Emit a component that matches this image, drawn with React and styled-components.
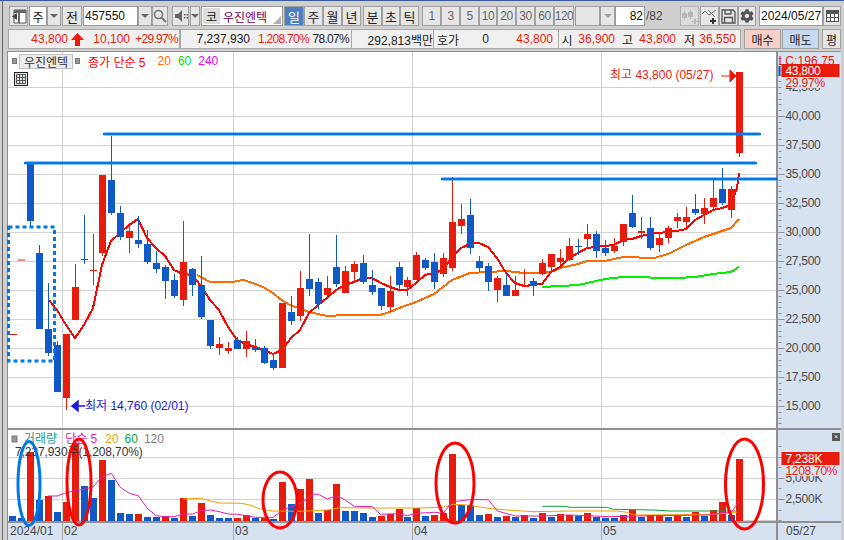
import styled, { createGlobalStyle } from "styled-components";
import { FaCog } from "react-icons/fa";

const RED = "#e81c0c";
const BLUE = "#1259c8";
const LINE_BLUE = "#0078e8";
const AXIS_BG = "#d6e2f0";
const GRID = "#d2d2d2";

const GlobalStyle = createGlobalStyle`
  html, body { margin: 0; padding: 0; background: #cfcfcf; overflow: hidden; }
  * { box-sizing: border-box; }
  body { font-family: "Liberation Sans", "Noto Sans CJK KR", sans-serif; font-size: 12px; }
`;

const Page = styled.div`
  width: 842px;
  height: 540px;
  margin-left: 2px;
  border-left: 1px solid #6a6a6a;
  background: #cfcfcf;
  display: flex;
  flex-direction: column;
  position: relative;
`;

const TopEdge = styled.div`
  height: 1px;
  margin-left: -3px;
  width: 844px;
  background: #3a5a9a;
  flex: none;
`;

const Toolbar = styled.div`
  display: flex;
  height: 20px;
  margin-top: 5px;
  padding-left: 6px;
  flex: none;
`;

const Btn = styled.div`
  width: ${(p) => p.$w || 19}px;
  margin-left: ${(p) => p.$ml || 0}px;
  height: 20px;
  flex: none;
  border: 1px solid #a0a0a0;
  background: ${(p) => (p.$active ? "#4a7fc0" : "#e6e6e6")};
  color: ${(p) => (p.$active ? "#fff" : p.$muted ? "#666" : "#222")};
  display: flex;
  align-items: center;
  justify-content: center;
  font-size: ${(p) => (p.$muted ? 12 : 13)}px;
  letter-spacing: ${(p) => (p.$muted ? -0.5 : 0)}px;
  white-space: nowrap;
  overflow: hidden;
  opacity: ${(p) => (p.$faded ? 0.6 : 1)};
`;

const Field = styled.div`
  width: ${(p) => p.$w}px;
  margin-left: ${(p) => p.$ml || 0}px;
  height: 20px;
  flex: none;
  border: 1px solid #9a9a9a;
  background: #fff;
  color: #111;
  display: flex;
  align-items: center;
  justify-content: ${(p) => p.$align || "flex-start"};
  padding: 0 1px;
  font-size: 12px;
  position: relative;
  white-space: nowrap;
`;

const Caret = styled.i`
  width: 0;
  height: 0;
  border-left: 4px solid transparent;
  border-right: 4px solid transparent;
  border-top: 4px solid ${(p) => p.$color || "#666"};
`;

const Chip = styled.span`
  width: 17px;
  height: 16px;
  background: #dcdcdc;
  display: flex;
  align-items: center;
  justify-content: center;
  margin-right: 3px;
  font-size: 12px;
`;

const StockName = styled.span`
  color: #7a0050;
  font-size: 12px;
`;

const CornerMark = styled.i`
  position: absolute;
  right: 1px;
  bottom: 1px;
  width: 0;
  height: 0;
  border-left: 8px solid transparent;
  border-bottom: 8px solid #b0b0b0;
`;

const PageCount = styled.span`
  width: 35px;
  flex: none;
  color: #444;
  font-size: 12px;
  line-height: 20px;
  padding-left: 1px;
`;

const InfoRow = styled.div`
  display: flex;
  height: 20px;
  margin-top: 3px;
  padding-left: 5px;
  flex: none;
`;

const InfoGroup = styled.div`
  width: ${(p) => p.$w}px;
  height: 20px;
  flex: none;
  display: flex;
  align-items: center;
  background: #f0f0f0;
  border: 1px solid #a8a8a8;
  border-left-width: ${(p) => (p.$join ? 0 : 1)}px;
  overflow: hidden;
`;

const Cell = styled.span`
  width: ${(p) => p.$w}px;
  flex: none;
  text-align: ${(p) => p.$align || "right"};
  color: ${(p) => (p.$red ? RED : "#222")};
  font-size: 12px;
  letter-spacing: ${(p) => (p.$tight ? -0.7 : 0)}px;
  white-space: nowrap;
`;

const ArrowCell = styled.span`
  width: 16px;
  flex: none;
  display: flex;
  justify-content: flex-end;
`;

const OrderBtn = styled.div`
  width: ${(p) => p.$w}px;
  margin-left: ${(p) => p.$ml || 0}px;
  height: 20px;
  flex: none;
  border: 1px solid #a0a0a0;
  background: ${(p) => p.$bg};
  color: #222;
  display: flex;
  align-items: center;
  justify-content: center;
  font-size: 12px;
`;

const Panes = styled.div`
  margin: 2px 0 0 4px;
  width: 834px;
  flex: 1;
  display: flex;
  flex-direction: column;
  border-top: 1px solid #909090;
  border-left: 1px solid #909090;
  min-height: 0;
`;

const PaneRow = styled.div`
  display: flex;
  height: ${(p) => p.$h}px;
  flex: none;
  border-bottom: 2px solid #909090;
`;

const Plot = styled.div`
  width: 768px;
  flex: none;
  background: #fff;
  position: relative;
`;

const Axis = styled.div`
  flex: 1;
  background: ${AXIS_BG};
  border-left: 2px solid #909090;
  position: relative;
`;

const Drawing = styled.svg`
  display: block;
  width: 100%;
  height: 100%;
  overflow: visible;
  position: relative;
  z-index: 2;
  font-family: "Liberation Sans", "Noto Sans CJK KR", sans-serif;
`;

const Legend = styled.div`
  position: absolute;
  z-index: 3;
  left: 2px;
  top: 1px;
  display: flex;
  align-items: center;
  height: 16px;
  font-size: 12px;
`;

const Pin = styled.i`
  width: 5px;
  height: 6px;
  background: #9a9a9a;
  border: 1px solid #777;
  margin: 0 2px;
`;

const NameTag = styled.span`
  width: 54px;
  height: 15px;
  background: #ececec;
  border: 1px solid #c0c0c0;
  color: #333;
  display: flex;
  align-items: center;
  justify-content: center;
  font-size: 12px;
`;

const Tone = styled.span`
  color: ${(p) => p.$c};
  margin-left: ${(p) => p.$ml || 0}px;
`;

const GridButton = styled.div`
  position: absolute;
  z-index: 3;
  left: 6px;
  top: 20px;
  width: 14px;
  height: 14px;
  border: 1px solid #222;
  background: #e6e6e6;
  display: flex;
  padding: 1px;
`;

const CloseMark = styled.div`
  position: absolute;
  z-index: 3;
  right: 1px;
  top: 3px;
  width: 8px;
  height: 8px;
  background: #555;
  color: #fff;
  font-size: 7px;
  line-height: 8px;
  text-align: center;
`;

const DateRow = styled.div`
  display: flex;
  flex: 1;
  background: ${AXIS_BG};
`;

const DateCell = styled.div`
  width: ${(p) => p.$w}px;
  flex: none;
  border-left: ${(p) => (p.$first ? "none" : p.$axis ? "2px solid #909090" : "1px solid #a8a8a8")};
  color: #444;
  font-size: 12px;
  line-height: 17px;
  padding-left: ${(p) => (p.$axis ? 8 : p.$first ? 2 : 1)}px;
  white-space: nowrap;
`;

// [body top, body bottom, wick top, wick bottom, colour], in page pixels
const candles = [
  [163, 221, 163, 228, "b"], [253, 329, 245, 329, "b"], [329, 353, 283, 356, "b"], [345, 392, 341, 392, "b"],
  [334, 398, 334, 410, "r"], [287, 320, 264, 320, "r"], [259, 260, 215, 264, "b"], [270, 271, 234, 285, "r"],
  [175, 253, 175, 256, "r"], [180, 213, 136, 215, "b"], [213, 237, 206, 240, "b"], [231, 238, 225, 253, "r"],
  [240, 244, 216, 248, "b"], [244, 262, 230, 264, "b"], [263, 269, 251, 273, "b"], [267, 281, 265, 299, "b"],
  [280, 296, 274, 298, "b"], [262, 300, 221, 306, "r"], [269, 285, 268, 296, "b"], [285, 317, 256, 319, "b"],
  [320, 346, 320, 349, "b"], [344, 348, 337, 355, "r"], [348, 351, 342, 354, "r"], [340, 349, 337, 349, "b"],
  [341, 349, 331, 357, "r"], [347, 350, 339, 352, "b"], [348, 363, 346, 364, "b"], [360, 368, 354, 370, "b"],
  [303, 368, 303, 368, "r"], [312, 321, 296, 325, "b"], [288, 316, 271, 321, "r"], [279, 289, 234, 296, "b"],
  [282, 304, 278, 309, "b"], [288, 295, 276, 298, "r"], [267, 284, 235, 287, "b"], [271, 293, 266, 293, "r"],
  [264, 272, 261, 282, "r"], [263, 282, 255, 284, "b"], [285, 292, 270, 295, "b"], [288, 306, 288, 310, "b"],
  [291, 307, 276, 312, "r"], [267, 285, 262, 290, "b"], [280, 287, 277, 296, "r"], [255, 280, 252, 280, "r"],
  [260, 268, 258, 270, "b"], [262, 282, 253, 289, "b"], [258, 274, 253, 277, "r"], [222, 268, 177, 271, "r"],
  [219, 226, 204, 234, "r"], [215, 248, 199, 254, "b"], [261, 268, 256, 272, "b"], [266, 282, 263, 291, "b"],
  [278, 290, 276, 302, "r"], [285, 296, 274, 296, "b"], [290, 296, 276, 296, "r"], [285, 286, 269, 286, "r"],
  [281, 286, 278, 296, "b"], [263, 274, 259, 275, "r"], [254, 267, 254, 271, "r"], [258, 262, 249, 265, "r"],
  [246, 260, 238, 261, "r"], [246, 247, 239, 255, "b"], [234, 239, 224, 248, "r"], [234, 251, 231, 258, "b"],
  [248, 253, 240, 256, "b"], [246, 251, 238, 253, "r"], [224, 242, 224, 246, "r"], [213, 227, 195, 228, "b"],
  [231, 233, 217, 239, "r"], [228, 248, 217, 250, "b"], [238, 245, 233, 252, "r"], [228, 238, 226, 243, "r"],
  [217, 221, 213, 228, "r"], [217, 222, 207, 228, "r"], [209, 213, 194, 215, "b"], [208, 214, 198, 224, "r"],
  [198, 207, 178, 210, "r"], [189, 203, 168, 205, "b"], [189, 210, 186, 218, "r"], [72, 153, 72, 157, "r"],
];

const barX = (i) => 30.5 + 9 * i - (i >= 42 ? 1 : 0) - (i === 79 ? 1 : 0);

const ma5 = "49,300 57,310 66,325 75,338 84,325 93,308 102,265 111,241 120,233 129,225 138,219 147,238 156,248 165,256 174,270 183,274 192,275 201,286 210,300 219,310 228,327 237,340 246,344 255,347 264,350 273,354 282,350 291,338 300,330 309,313 318,305 327,298 336,290 345,285 354,282 363,278 372,278 381,283 390,287 399,290 407,290 416,283 425,275 434,273 443,270 452,257 461,248 470,244 479,243 488,247 497,258 506,273 515,283 524,286 533,285 542,284 551,272 560,267 569,258 578,253 587,248 596,247 605,246 614,245 623,240 632,239 641,236 650,234 659,233 668,232 677,231 686,229 695,220 704,215 713,210 722,208 731,205 737,188 739,173";
const ma20 = "197,275 210,282 221,282 232,282 243,280 253,283 263,287 273,293 280,299 290,305 309,312 318,314 327,316 345,315 380,315 390,312 399,308 416,302 434,294 443,287 452,280 470,273 488,272 506,271 524,273 542,273 551,272 560,268 578,264 587,261 605,261 623,257 654,258 668,254 686,245 704,237 731,228 739,219";
const ma60 = "542,287 578,285 605,279 623,277 677,278 695,277 713,274 731,272 739,267";

// top of each volume bar, in zoom units (3x, starting at y = 425); first two bars lie left of the first candle
const volumes = [
  ["b", 273], ["b", 280], ["r", 80], ["b", 225], ["r", 213], ["b", 261], ["r", 231], ["r", 55], ["b", 183], ["b", 219],
  ["r", 105], ["b", 165], ["b", 264], ["b", 267], ["r", 267], ["b", 276], ["b", 276], ["r", 273], ["b", 278], ["r", 219],
  ["b", 273], ["r", 234], ["b", 270], ["b", 279], ["b", 279], ["r", 279], ["r", 270], ["b", 279], ["r", 278], ["b", 282],
  ["r", 171], ["b", 237], ["r", 192], ["r", 162], ["b", 264], ["r", 254], ["r", 177], ["b", 258], ["b", 258], ["b", 264],
  ["b", 276], ["r", 273], ["r", 268], ["r", 252], ["b", 276], ["r", 249], ["b", 273], ["r", 270], ["r", 264], ["r", 87],
  ["b", 241], ["b", 241], ["b", 270], ["r", 267], ["b", 276], ["r", 273], ["b", 276], ["r", 270], ["b", 279], ["r", 264],
  ["b", 276], ["r", 267], ["r", 270], ["b", 273], ["r", 264], ["b", 276], ["b", 279], ["b", 279], ["r", 270], ["r", 255],
  ["b", 276], ["r", 270], ["r", 270], ["b", 276], ["r", 270], ["b", 276], ["r", 261], ["b", 273], ["r", 255], ["r", 231],
  ["b", 270], ["r", 102],
];

const fromZoom = (ox, list) => list.map(([x, y]) => `${(ox + x / 3).toFixed(1)},${(425 + y / 3).toFixed(1)}`).join(" ");

const volMa5 =
  fromZoom(0, [[145, 213], [172, 213], [199, 203], [226, 197], [253, 193], [280, 185], [307, 155], [334, 145], [361, 187], [388, 205], [415, 212], [442, 250], [469, 272], [496, 275], [523, 275], [550, 267], [577, 267], [604, 257], [631, 255], [658, 260], [685, 267], [712, 268], [739, 272], [766, 277], [820, 277], [847, 255], [874, 245]]) +
  " " +
  fromZoom(300, [[0, 235], [40, 208], [55, 208], [82, 222], [109, 212], [136, 225], [163, 244], [217, 245], [241, 268], [295, 266], [322, 272], [349, 265], [403, 262], [430, 265], [457, 230], [511, 224], [565, 224], [592, 258], [646, 273], [727, 273], [808, 270]]) +
  " " +
  fromZoom(570, [[120, 275], [250, 272], [430, 270], [457, 262], [484, 262], [508, 228]]);
const volMa20 =
  fromZoom(0, [[550, 222], [604, 220], [631, 228], [660, 234], [724, 235], [750, 240], [780, 252], [820, 258]]) +
  " " +
  fromZoom(300, [[0, 259], [40, 257], [82, 255], [120, 248], [217, 249], [350, 249], [430, 247], [460, 238], [500, 240], [565, 250], [620, 255], [700, 260], [810, 258]]) +
  " " +
  fromZoom(570, [[140, 258], [170, 262], [190, 270], [430, 268], [500, 262]]);
const volMa60 =
  fromZoom(300, [[727, 244], [795, 244]]) + " " + fromZoom(570, [[0, 247], [110, 247], [130, 253], [250, 255], [300, 258], [500, 258]]);

const priceGrid = [87, 116, 145, 174, 203, 232, 261, 290, 319, 348, 377, 406];
const priceLabels = ["42,500", "40,000", "37,500", "35,000", "32,500", "30,000", "27,500", "25,000", "22,500", "20,000", "17,500", "15,000"];
const vLines = [62, 233, 412, 601];
const trendLines = [
  [103, 134, 761],
  [24, 163, 757],
  [441, 179, 778],
];

function Candles() {
  return candles.map(([top, bottom, wickTop, wickBottom, c], i) => {
    const x = barX(i);
    const fill = c === "r" ? RED : BLUE;
    return (
      <g key={i} fill={fill} shapeRendering="crispEdges">
        <rect x={x - 0.5} y={wickTop} width={1} height={wickBottom - wickTop} />
        <rect x={x - 3.5} y={top} width={7} height={bottom - top} />
      </g>
    );
  });
}

function PriceChart() {
  return (
    <Drawing viewBox="8 52 768 376">
      {priceGrid.map((y) => (
        <rect key={y} x={8} y={y} width={768} height={1} fill={GRID} />
      ))}
      {vLines.map((x) => (
        <rect key={x} x={x} y={52} width={1} height={376} fill={GRID} />
      ))}
      <g fill="none" strokeWidth="2" shapeRendering="crispEdges">
        <polyline points={ma60} stroke="#00f000" />
        <polyline points={ma20} stroke="#ff6a00" />
        <polyline points={ma5} stroke="#f00" />
      </g>
      <Candles />
      <rect x={18} y={259.5} width={7} height={1} fill={RED} />
      <rect x={10} y={334} width={7} height={1} fill={RED} />
      <rect x={8.5} y={227} width={46} height={134} fill="none" stroke={LINE_BLUE} strokeWidth="3" strokeDasharray="4 3" />
      {trendLines.map(([x1, y, x2]) => (
        <g key={y}>
          <rect x={x1} y={y - 2} width={x2 - x1} height={4} rx={2} fill={LINE_BLUE} opacity="0.45" />
          <rect x={x1} y={y - 1} width={x2 - x1} height={2} fill={LINE_BLUE} />
        </g>
      ))}
      <text x={610} y={79} fill={RED} fontSize="12">최고 43,800 (05/27)</text>
      <path d="M721 76h9M730 70l6 6-6 6z" stroke={RED} fill={RED} strokeWidth="1" />
      <text x={85} y={410} fill="#1a1ae0" fontSize="12">최저 14,760 (02/01)</text>
      <path d="M85 406H77M72 406l6-5v10z" stroke="#1a1ae0" fill="#1a1ae0" strokeWidth="1.5" />
    </Drawing>
  );
}

function PriceAxis() {
  const ticks = [];
  for (let y = 58; y < 428; y += 5.8) ticks.push(Math.round(y));
  return (
    <Drawing viewBox="778 52 62 376">
      {ticks.map((y) => (
        <rect key={y} x={778} y={y} width={3} height={1} fill="#909090" />
      ))}
      {priceGrid.map((y) => (
        <rect key={y} x={778} y={y} width={6} height={1} fill="#909090" />
      ))}
      {priceLabels.map((t, n) => (
        <text key={t} x={785} y={priceGrid[n] + 4} fill="#4a4a4a" fontSize="12" letterSpacing="-0.3">{t}</text>
      ))}
      <text x={778} y={65} fill={RED} fontSize="12" letterSpacing="0.1">LC:196.75</text>
      <rect x={778} y={66} width={2} height={10} fill={BLUE} />
      <rect x={781} y={77} width={58} height={11} fill={AXIS_BG} />
      <rect x={781} y={64} width={58} height={13} fill={RED} />
      <text x={785} y={75} fill="#fff" fontSize="12" letterSpacing="-0.3">43,800</text>
      <text x={785} y={87} fill={RED} fontSize="12" letterSpacing="-0.2">29.97%</text>
    </Drawing>
  );
}

function VolumeChart() {
  return (
    <Drawing viewBox="8 430 768 91">
      {[457, 478, 499, 520].map((y) => (
        <rect key={y} x={8} y={y} width={768} height={1} fill={GRID} />
      ))}
      {vLines.map((x) => (
        <rect key={x} x={x} y={430} width={1} height={91} fill={GRID} />
      ))}
      <g shapeRendering="crispEdges">
        {volumes.map(([c, z], n) => {
          const top = 425 + z / 3;
          return <rect key={n} x={barX(n - 2) - 3.5} y={top} width={7} height={520.7 - top} fill={c === "r" ? RED : BLUE} />;
        })}
      </g>
      <polyline points={volMa60} fill="none" stroke="#0aa040" strokeWidth="1" />
      <polyline points={volMa20} fill="none" stroke="#f0a000" strokeWidth="1" />
      <polyline points={volMa5} fill="none" stroke="#e020b0" strokeWidth="1" />
      <rect x={12} y={436} width={5} height={6} fill="#9a9a9a" stroke="#777" />
      <text x={24} y={443} fontSize="12">
        <tspan fill="#20a090">거래량</tspan>
        <tspan fill="#e020b0" dx="8">단순 5</tspan>
        <tspan fill="#f0a000" dx="8">20</tspan>
        <tspan fill="#0aa040" dx="6">60</tspan>
        <tspan fill="#808080" dx="6">120</tspan>
      </text>
      <text x={15} y={456} fill="#333" fontSize="12" letterSpacing="-0.1">7,237,930주(1,208,70%)</text>
      <g fill="none" strokeWidth="3">
        <ellipse cx={29} cy={483.5} rx={11} ry={42} stroke={LINE_BLUE} />
        <ellipse cx={79} cy={482} rx={12} ry={43} stroke="#f00" />
        <ellipse cx={280} cy={500} rx={17} ry={28} stroke="#f00" />
        <ellipse cx={455} cy={483} rx={19} ry={40} stroke="#f00" />
        <ellipse cx={744.500} cy={484} rx={19} ry={45} stroke="#f00" />
      </g>
    </Drawing>
  );
}

function VolumeAxis() {
  return (
    <Drawing viewBox="778 430 62 91">
      {[447, 468, 489, 511, 521].map((y) => (
        <rect key={y} x={778} y={y - 1} width={3} height={1} fill="#909090" />
      ))}
      {[457, 478, 499].map((y) => (
        <rect key={y} x={778} y={y} width={6} height={1} fill="#909090" />
      ))}
      <text x={785} y={482} fill="#4a4a4a" fontSize="12" letterSpacing="-0.2">5,000K</text>
      <text x={785} y={503} fill="#4a4a4a" fontSize="12" letterSpacing="-0.2">2,500K</text>
      <rect x={781} y={465} width={58} height={11} fill={AXIS_BG} />
      <rect x={781} y={452} width={58} height={13} fill={RED} />
      <text x={785} y={463} fill="#fff" fontSize="12" letterSpacing="-0.2">7,238K</text>
      <text x={785} y={475} fill={RED} fontSize="12" letterSpacing="-0.3">1208.70%</text>
    </Drawing>
  );
}

const PanelIcon = () => (
  <svg width="16" height="15" viewBox="0 0 16 15">
    <path d="M3 1h12v13H3z" fill="#fff" stroke="#555" />
    <path d="M3 1h12v3H3zM7 4h2v10H7z" fill="#666" />
    <path d="M6 4v7L1 7.500z" fill="#444" />
  </svg>
);

const SearchIcon = () => (
  <svg width="14" height="14" viewBox="0 0 14 14" fill="none" stroke="#777" strokeWidth="1.6">
    <circle cx="5.500" cy="5.500" r="4" />
    <path d="M8.500 8.500L13 13" strokeWidth="2.200" />
  </svg>
);

const SpeakerIcon = () => (
  <svg width="14" height="14" viewBox="0 0 14 14" fill="#666">
    <path d="M1 5h3l4-4v12l-4-4H1z" />
    <path d="M10 5h1.500v1.500H10zM10 8h1.500v1.500H10zM12.500 5H14v1.500h-1.500zM12.500 8H14v1.500h-1.500z" />
  </svg>
);

const UpArrow = () => (
  <svg width="13" height="13" viewBox="0 0 13 13" fill="#f01808">
    <path d="M6.500 0L13 7H9v6H4V7H0z" />
  </svg>
);

const CandlePlus = () => (
  <svg width="16" height="15" viewBox="0 0 16 15" fill="#a8a8a8">
    <path d="M2 2h1v2h2v5H3v2H2V9H0V4h2zM8 1h1v2h2v5H9v2H8V8H6V3h2zM12 10h2v2h2v1h-2v2h-2v-2h-2v-1h2z" />
  </svg>
);

const LinePlus = () => (
  <svg width="16" height="15" viewBox="0 0 16 15" fill="none">
    <path d="M0 5l3-3 4 4 3-2 4-3M6 1l7 7" stroke="#777" />
    <path d="M10 9h2v2h2v2h-2v2h-2v-2H8v-2h2z" fill="#333" />
  </svg>
);

const SaveIcon = () => (
  <svg width="15" height="15" viewBox="0 0 15 15" fill="none" stroke="#555" strokeWidth="1.300">
    <path d="M1 1h11l2 2v11H1z" />
    <path d="M4 1v4h6V1M3.500 14V8.500h8V14" />
  </svg>
);

const CalendarIcon = () => (
  <svg width="13" height="12" viewBox="0 0 13 12" fill="none" stroke="#555">
    <rect x="0.500" y="0.500" width="12" height="11" fill="#fff" />
    <rect x="0.500" y="0.500" width="12" height="3" fill="#555" />
    <path d="M4.500 4v7M8.500 4v7M1 7.500h11" />
  </svg>
);

const GridGlyph = () => (
  <svg width="10" height="10" viewBox="0 0 10 10" fill="none" stroke="#555">
    <path d="M.5.500h9v9h-9zM.5 3.500h9M.5 6.500h9M3.500.500v9M6.500.500v9" />
  </svg>
);

export default function App() {
  return (
    <>
      <GlobalStyle />
      <Page>
        <TopEdge />
        <Toolbar>
          <Btn $w={19}><PanelIcon /></Btn>
          <Field $w={18} $ml={1} $align="center">주</Field>
          <Btn $w={14}><Caret /></Btn>
          <Btn $w={20} $ml={1}>전</Btn>
          <Field $w={55} $ml={1}>457550</Field>
          <Btn $w={14}><Caret /></Btn>
          <Btn $w={16}><SearchIcon /></Btn>
          <Btn $w={17} $ml={4}><SpeakerIcon /></Btn>
          <Btn $w={10} $ml={1}><Caret /></Btn>
          <Field $w={82} $ml={1}>
            <Chip>코</Chip>
            <StockName>우진엔텍</StockName>
            <CornerMark />
          </Field>
          <Btn $w={20} $ml={1} $active>일</Btn>
          <Btn>주</Btn>
          <Btn>월</Btn>
          <Btn>년</Btn>
          <Btn $ml={2}>분</Btn>
          <Btn $w={18}>초</Btn>
          <Btn>틱</Btn>
          <Btn $ml={3} $muted>1</Btn>
          <Btn $muted>3</Btn>
          <Btn $muted>5</Btn>
          <Btn $w={18} $muted>10</Btn>
          <Btn $muted>20</Btn>
          <Btn $muted>30</Btn>
          <Btn $muted>60</Btn>
          <Btn $w={20} $muted>120</Btn>
          <Btn $w={25} $ml={1} />
          <Btn $w={15}><Caret $color="#a0a0a0" /></Btn>
          <Field $w={30} $align="flex-end">82</Field>
          <PageCount>/82</PageCount>
          <Btn $w={19} $faded><CandlePlus /></Btn>
          <Btn $w={19} $ml={1}><LinePlus /></Btn>
          <Btn $w={19}><SaveIcon /></Btn>
          <Btn $w={18}><FaCog size={14} color="#555" /></Btn>
          <Field $w={64} $ml={3}>2024/05/27</Field>
          <Btn $w={18}><CalendarIcon /></Btn>
        </Toolbar>
        <InfoRow>
          <InfoGroup $w={172}>
            <Cell $w={59} $red>43,800</Cell>
            <ArrowCell><UpArrow /></ArrowCell>
            <Cell $w={46} $red>10,100</Cell>
            <Cell $w={48} $red $tight>+29.97%</Cell>
          </InfoGroup>
          <InfoGroup $w={172}>
            <Cell $w={69}>7,237,930</Cell>
            <Cell $w={59} $red $tight>1,208.70%</Cell>
            <Cell $w={40} $tight>78.07%</Cell>
          </InfoGroup>
          <InfoGroup $w={82} $join>
            <Cell $w={81}>292,813백만</Cell>
          </InfoGroup>
          <InfoGroup $w={125} $join>
            <Cell $w={28} $align="center">호가</Cell>
            <Cell $w={27}>0</Cell>
            <Cell $w={64} $red>43,800</Cell>
          </InfoGroup>
          <InfoGroup $w={182} $join>
            <Cell $w={16} $align="center">시</Cell>
            <Cell $w={40} $red>36,900</Cell>
            <Cell $w={18}>고</Cell>
            <Cell $w={43} $red>43,800</Cell>
            <Cell $w={19}>저</Cell>
            <Cell $w={41} $red>36,550</Cell>
          </InfoGroup>
          <OrderBtn $w={37} $ml={3} $bg="#f5d0c8">매수</OrderBtn>
          <OrderBtn $w={37} $ml={1} $bg="#c4daf0">매도</OrderBtn>
          <OrderBtn $w={19} $ml={3} $bg="#e6e6e6">평</OrderBtn>
        </InfoRow>
        <Panes>
          <PaneRow $h={378}>
            <Plot>
              <Legend>
                <Pin />
                <NameTag>우진엔텍</NameTag>
                <Pin />
                <Tone $c="#f00" $ml={6}>종가 단순 5</Tone>
                <Tone $c="#ff6a00" $ml={12}>20</Tone>
                <Tone $c="#00e000" $ml={7}>60</Tone>
                <Tone $c="#f000f0" $ml={7}>240</Tone>
              </Legend>
              <GridButton><GridGlyph /></GridButton>
              <PriceChart />
            </Plot>
            <Axis><PriceAxis /></Axis>
          </PaneRow>
          <PaneRow $h={93}>
            <Plot><VolumeChart /></Plot>
            <Axis>
              <CloseMark>×</CloseMark>
              <VolumeAxis />
            </Axis>
          </PaneRow>
          <DateRow>
            <DateCell $w={54} $first>2024/01</DateCell>
            <DateCell $w={171}>02</DateCell>
            <DateCell $w={179}>03</DateCell>
            <DateCell $w={189}>04</DateCell>
            <DateCell $w={175}>05</DateCell>
            <DateCell $w={64} $axis>05/27</DateCell>
          </DateRow>
        </Panes>
      </Page>
    </>
  );
}
